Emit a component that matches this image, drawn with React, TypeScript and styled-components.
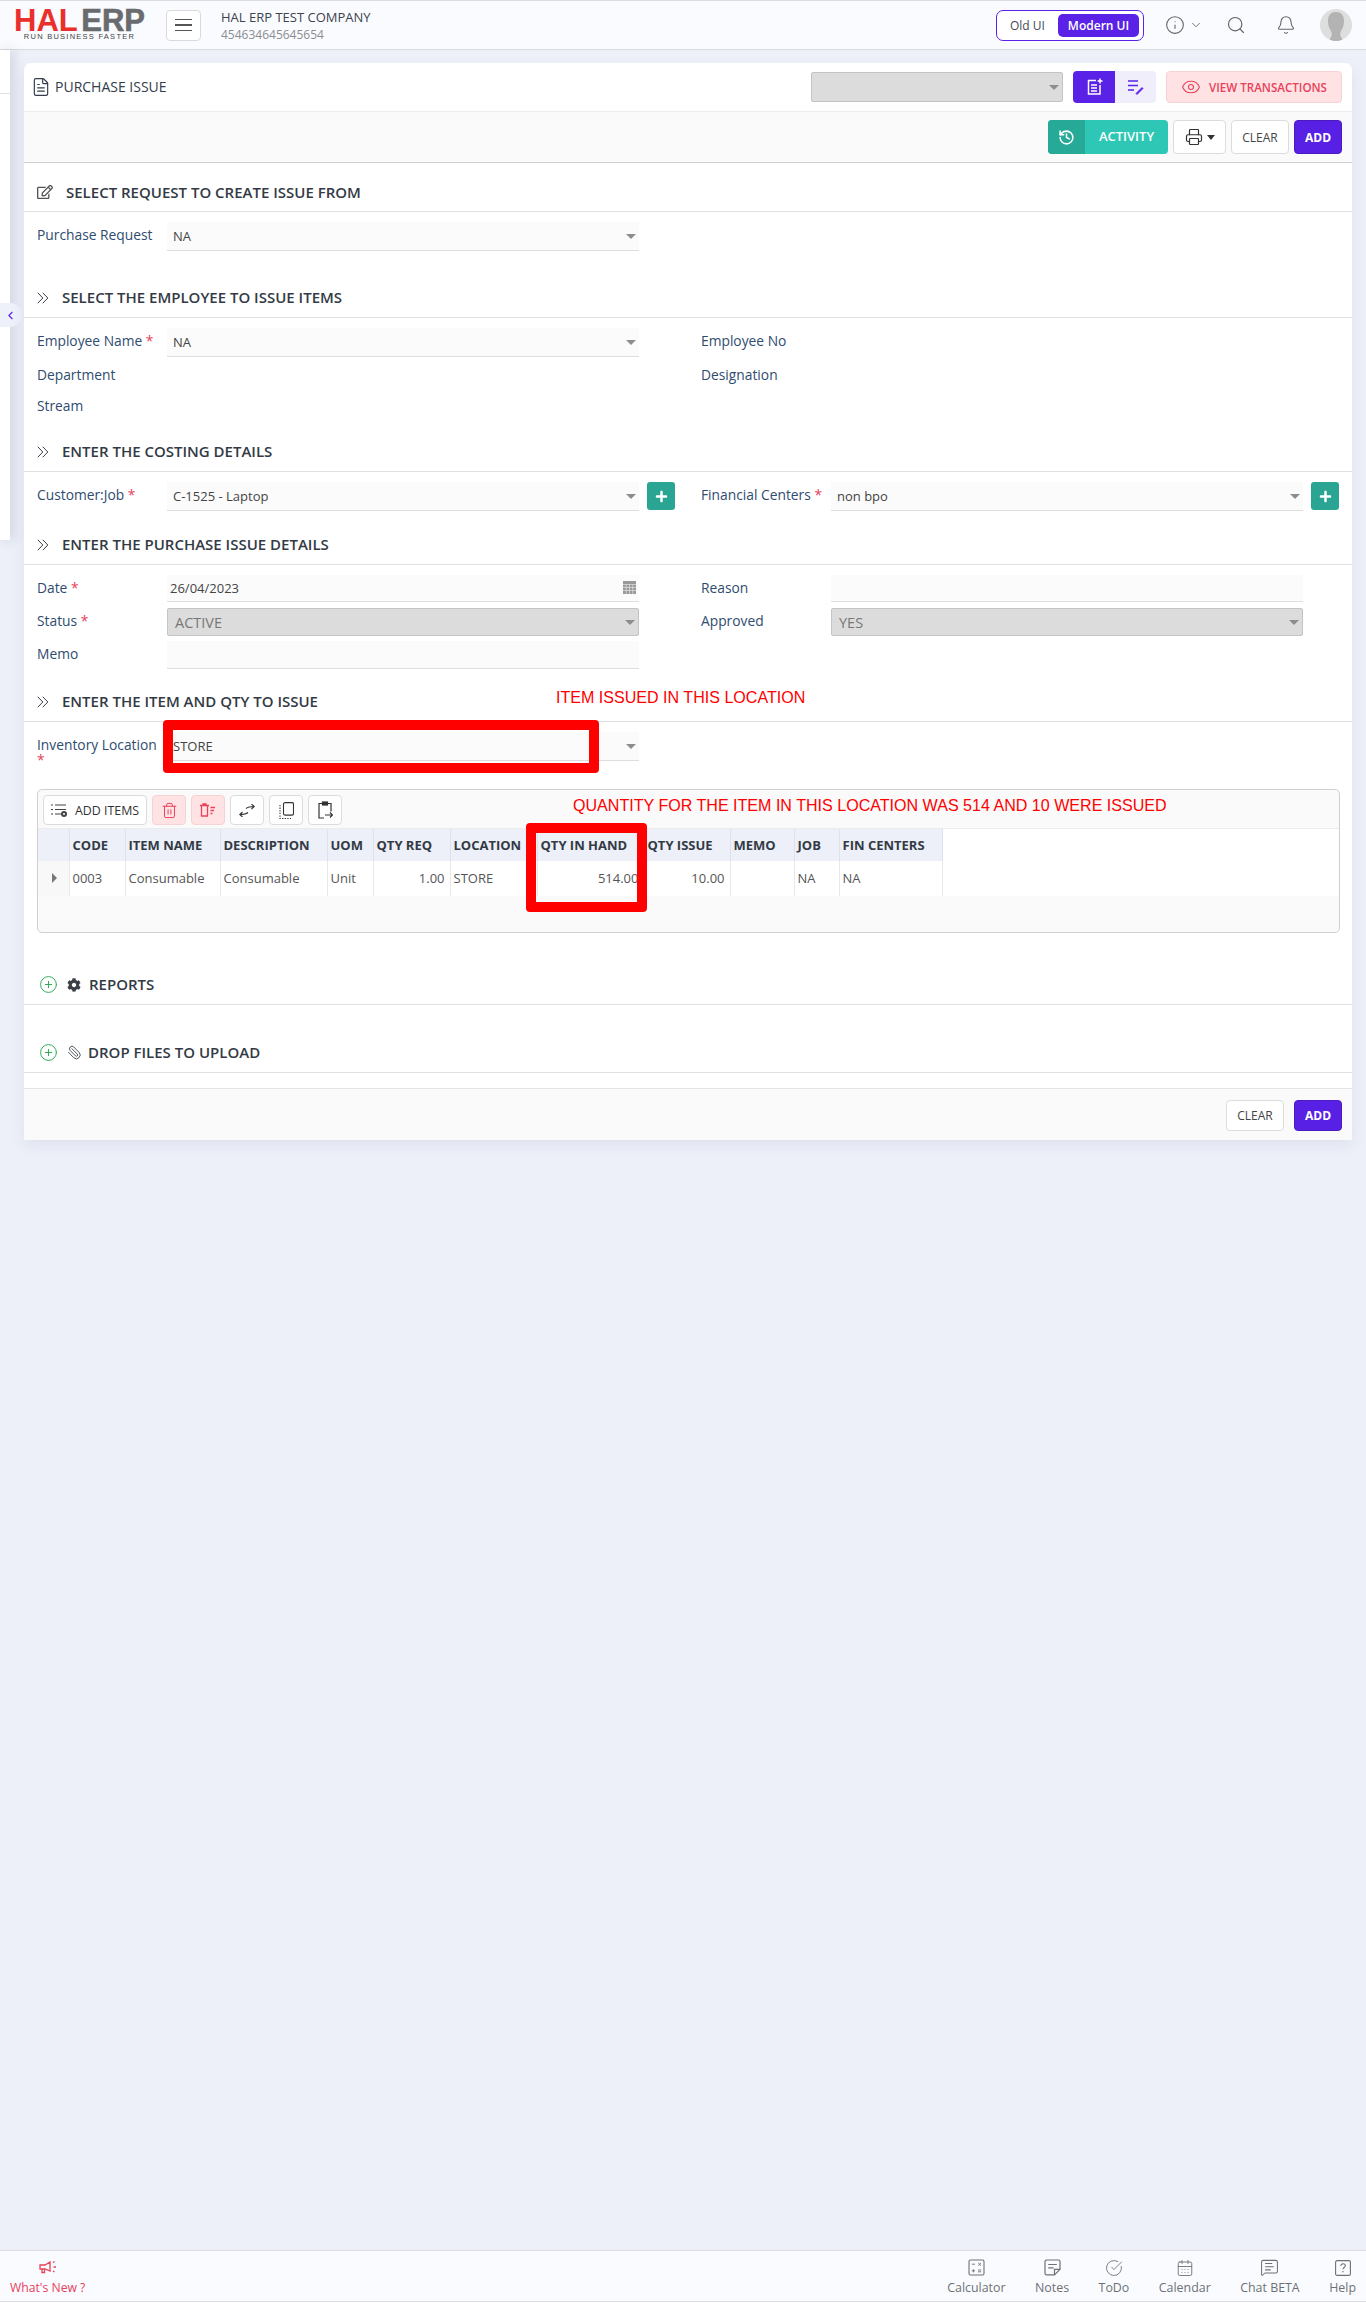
import styled, { createGlobalStyle } from "styled-components";
import {
  Bell,
  CalendarDays,
  ChevronDown,
  ChevronLeft,
  CircleCheckBig,
  CirclePlus,
  Eye,
  FileText,
  History,
  Info,
  MessageSquareText,
  Paperclip,
  Printer,
  Search,
  Trash2,
} from "lucide-react";
import { FaCog, FaPlus, FaRegEdit } from "react-icons/fa";

const GlobalStyle = createGlobalStyle`
    html, body {
        margin: 0;
        padding: 0;
        background: #edf0f8;
    }
    * {
        box-sizing: border-box;
    }
`;

const Page = styled.div`
    width: 1366px;
    min-height: 2302px;
    display: flex;
    flex-direction: column;
    background: #edf0f8;
    font-family: "Open Sans", "Liberation Sans", sans-serif;
    font-size: 13px;
    color: #333;
`;

/* top bar */
const TopBar = styled.header`
    height: 50px;
    display: flex;
    align-items: center;
    padding: 0 14px 0 14px;
    background: #fafbff;
    border-top: 1px solid #dddddd;
    border-bottom: 1px solid #d9dbe0;
`;

const Logo = styled.div`
    width: 131px;
    display: flex;
    flex-direction: column;
    align-items: center;
`;

const LogoMark = styled.div`
    display: flex;
    justify-content: space-between;
    width: 131px;
    height: 24px;
    font-family: "Liberation Sans", Arial, sans-serif;
    font-weight: 700;
    font-size: 31px;
    line-height: 24px;
`;

const LogoHal = styled.span`
    color: #e9302c;
`;

const LogoErp = styled.span`
    color: #6a6b6f;
    -webkit-text-stroke: 0.6px #6a6b6f;
`;

const LogoTag = styled.div`
    font-family: "Liberation Sans", Arial, sans-serif;
    font-size: 7.5px;
    line-height: 8px;
    letter-spacing: 1.25px;
    color: #444;
    white-space: nowrap;
`;

const MenuButton = styled.button`
    width: 35px;
    height: 31px;
    margin-left: 21px;
    display: flex;
    flex-direction: column;
    align-items: center;
    justify-content: center;
    gap: 4px;
    background: #fff;
    border: 1px solid #d8dadd;
    border-radius: 4px;
    padding: 0;

    span {
        display: block;
        width: 17px;
        height: 1.5px;
        background: #555;
    }
`;

const Company = styled.div`
    margin-left: 20px;
    padding-top: 2px;
    flex: 1;
`;

const CompanyName = styled.div`
    font-size: 13px;
    line-height: 16px;
    color: #3c4350;
`;

const CompanyCode = styled.div`
    font-size: 12px;
    line-height: 16px;
    margin-top: 2px;
    color: #8b8d92;
`;

const UiSwitch = styled.div`
    width: 148px;
    height: 31px;
    display: flex;
    align-items: center;
    padding: 0 4px 0 13px;
    background: #fff;
    border: 1px solid #5a22e6;
    border-radius: 7px;
    margin-right: 21px;
`;

const OldUi = styled.span`
    font-size: 12px;
    font-weight: 500;
    color: #454a58;
    flex: 1;
`;

const ModernUi = styled.span`
    width: 81px;
    height: 23px;
    display: flex;
    align-items: center;
    justify-content: center;
    font-size: 12px;
    font-weight: 600;
    color: #fff;
    background: #5a22e6;
    border-radius: 5px;
`;

const TopIcon = styled.span<{ $ml?: number }>`
    display: flex;
    margin-left: ${(p) => p.$ml ?? 0}px;
    color: #5f6368;
`;

const Avatar = styled.div`
    width: 32px;
    height: 32px;
    margin-left: 24px;
    border-radius: 50%;
    background: #dedede;
    overflow: hidden;
`;

/* main area */
const Main = styled.main`
    flex: 1;
    display: flex;
    align-items: flex-start;
`;

const SideStrip = styled.aside`
    position: relative;
    width: 10px;
    height: 490px;
    background: #fff;
    box-shadow: 3px 0 12px rgba(90, 95, 120, 0.22);
    flex-shrink: 0;

    &::before {
        content: "";
        display: block;
        height: 43px;
        border-bottom: 1px solid #e2e2e2;
    }
`;

const SideToggle = styled.button`
    position: absolute;
    left: 0;
    top: 253px;
    width: 22px;
    height: 24px;
    padding: 0 2px 0 0;
    display: flex;
    align-items: center;
    justify-content: center;
    background: #eef0fa;
    border: 0;
    border-radius: 0 12px 12px 0;
    color: #5a22e6;
`;

const Card = styled.section`
    position: relative;
    width: 1328px;
    margin: 13px 0 0 14px;
    background: #fff;
    border-radius: 7px 7px 0 0;
    box-shadow: 0 6px 14px rgba(120, 130, 170, 0.12);
`;

const TitleRow = styled.div`
    height: 49px;
    display: flex;
    align-items: center;
    padding: 0 10px 0 7px;
    border-bottom: 1px solid #ececec;
`;

const PageTitle = styled.h1`
    margin: 0 0 2px 4px;
    flex: 1;
    font-size: 14px;
    font-weight: 400;
    color: #333d4b;
`;

const TopSelect = styled.div`
    position: relative;
    width: 252px;
    height: 30px;
    background: #dcdcdc;
    border: 1px solid #c4c4c4;
    border-radius: 2px;
    margin-right: 10px;
`;

const Caret = styled.i`
    position: absolute;
    right: 3px;
    top: 50%;
    margin-top: -2px;
    width: 0;
    height: 0;
    border-left: 5px solid transparent;
    border-right: 5px solid transparent;
    border-top: 5px solid #8d8d8d;
`;

const ViewToggle = styled.div`
    width: 83px;
    height: 32px;
    display: flex;
    border-radius: 4px;
    overflow: hidden;
    margin-right: 10px;
`;

const ViewTab = styled.span<{ $active?: boolean }>`
    display: flex;
    align-items: center;
    justify-content: center;
    width: ${(p) => (p.$active ? 42 : 41)}px;
    color: ${(p) => (p.$active ? "#fff" : "#5a22e6")};
    background: ${(p) => (p.$active ? "#5a22e6" : "#f1eefc")};
`;

const TransactionsButton = styled.button`
    width: 176px;
    height: 32px;
    display: flex;
    align-items: center;
    justify-content: center;
    gap: 8px;
    padding: 0;
    background: #ffe3e4;
    border: 1px solid #f7d2d4;
    border-radius: 4px;
    color: #e8415a;
    font-family: inherit;
    font-size: 11.6px;
    font-weight: 600;
`;

const ActionRow = styled.div<{ $footer?: boolean }>`
    display: flex;
    align-items: center;
    justify-content: flex-end;
    height: ${(p) => (p.$footer ? 52 : 51)}px;
    padding-right: 10px;
    gap: ${(p) => (p.$footer ? 10 : 5)}px;
    background: #fafafa;
    ${(p) => (p.$footer ? "border-top: 1px solid #e4e4e4; margin-top: 15px; padding-top: 2px;" : "border-bottom: 1px solid #cfcfcf;")}
`;

const ActivityButton = styled.button`
    width: 120px;
    height: 34px;
    display: flex;
    align-items: stretch;
    padding: 0;
    border: 0;
    border-radius: 4px;
    overflow: hidden;
    background: #2ec7b6;
    color: #fff;
    font-family: inherit;
    font-size: 13px;
    font-weight: 600;
`;

const ActivityIcon = styled.span`
    width: 37px;
    display: flex;
    align-items: center;
    justify-content: center;
    background: #27a998;
`;

const ActivityText = styled.span`
    flex: 1;
    display: flex;
    align-items: center;
    justify-content: center;
    padding-bottom: 2px;
`;

const PlainButton = styled.button<{ $w: number; $h?: number }>`
    width: ${(p) => p.$w}px;
    height: ${(p) => p.$h ?? 34}px;
    display: flex;
    align-items: center;
    justify-content: center;
    gap: 4px;
    padding: 0;
    background: #fff;
    border: 1px solid #dcdcdc;
    border-radius: 4px;
    color: #444;
    font-family: inherit;
    font-size: 12px;
`;

const AddButton = styled.button<{ $h?: number }>`
    width: 48px;
    height: ${(p) => p.$h ?? 34}px;
    padding: 0;
    background: #5720e4;
    border: 1px solid #4a1cc0;
    border-radius: 4px;
    color: #fff;
    font-family: inherit;
    font-size: 12px;
    font-weight: 700;
`;

const SmallCaret = styled.i`
    width: 0;
    height: 0;
    border-left: 4px solid transparent;
    border-right: 4px solid transparent;
    border-top: 5px solid #333;
`;

/* sections */
const SectionHeader = styled.div<{ $top: number }>`
    height: 40px;
    margin-top: ${(p) => p.$top}px;
    display: flex;
    align-items: center;
    padding-left: 13px;
    border-bottom: 1px solid #e0e0e0;
`;

const SectionIcon = styled.span<{ $mr: number; $ml?: number; $color?: string }>`
    display: flex;
    margin-left: ${(p) => p.$ml ?? 0}px;
    margin-right: ${(p) => p.$mr}px;
    color: ${(p) => p.$color ?? "#3a3f47"};
`;

const ClipIcon = styled(Paperclip)`
    transform: scaleX(-1);
`;

const SectionTitle = styled.h2<{ $low?: boolean }>`
    margin: ${(p) => (p.$low ? "1px 0 0" : "0 0 1px")};
    font-size: 15px;
    font-weight: 600;
    color: #333a45;
`;

const FormRow = styled.div<{ $top?: number; $height?: number }>`
    display: grid;
    grid-template-columns: 638px 638px;
    column-gap: 26px;
    margin: ${(p) => p.$top ?? 0}px 0 0 13px;
    ${(p) => (p.$height ? `height: ${p.$height}px;` : "")}
`;

const Field = styled.div`
    display: grid;
    grid-template-columns: 130px 472px 36px;
    align-items: start;
`;

const FieldLabel = styled.label`
    padding-top: 5px;
    font-size: 13.8px;
    font-weight: 500;
    line-height: 15px;
    color: #2f4c70;
`;

const Required = styled.span`
    color: #e8415a;
`;

const InputBox = styled.div<{ $h?: number; $disabled?: boolean }>`
    position: relative;
    height: ${(p) => p.$h ?? 29}px;
    display: flex;
    align-items: center;
    padding: ${(p) => (p.$disabled ? "0 7px" : "0 6px")};
    font-size: ${(p) => (p.$disabled ? 14.5 : 13)}px;
    color: ${(p) => (p.$disabled ? "#777" : "#444")};
    background: ${(p) => (p.$disabled ? "#dcdcdc" : "#fbfbfb")};
    ${(p) =>
      p.$disabled
        ? "border: 1px solid #c4c4c4; border-radius: 2px;"
        : "border-bottom: 1px solid #dedede;"}
`;

const DateText = styled.span`
    margin-left: -3px;
`;

const CalendarGlyph = styled.span`
    position: absolute;
    right: 3px;
    top: 6px;
    display: flex;
`;

const AddField = styled.button`
    width: 28px;
    height: 28px;
    margin-left: 8px;
    padding: 0;
    display: flex;
    align-items: center;
    justify-content: center;
    background: #2aa593;
    border: 0;
    border-radius: 3px;
    color: #fff;
`;

/* items grid */
const GridBox = styled.div`
    margin: 28px 12px 0 13px;
    height: 144px;
    background: #fafafa;
    border: 1px solid #cfcfcf;
    border-radius: 5px;
    overflow: hidden;
`;

const GridToolbar = styled.div`
    height: 39px;
    display: flex;
    align-items: flex-start;
    gap: 5px;
    padding: 5px 0 0 5px;
    border-bottom: 1px solid #ececec;
`;

const ToolButton = styled.button<{ $danger?: boolean; $wide?: boolean }>`
    width: ${(p) => (p.$wide ? 104 : 34)}px;
    height: 30px;
    display: flex;
    align-items: center;
    justify-content: center;
    gap: 7px;
    padding: 0;
    background: ${(p) => (p.$danger ? "#ffe3e4" : "#fff")};
    border: 1px solid ${(p) => (p.$danger ? "#f7d2d4" : "#dcdcdc")};
    border-radius: 4px;
    color: ${(p) => (p.$danger ? "#e8415a" : "#333")};
    font-family: inherit;
    font-size: 12.4px;
`;

const GridArea = styled.div`
    background: #fff;
`;

const ItemTable = styled.table`
    table-layout: fixed;
    width: 904px;
    border-collapse: collapse;
`;

const HeadCell = styled.th<{ $w: number }>`
    width: ${(p) => p.$w}px;
    height: 32px;
    padding: 0 3px;
    text-align: left;
    white-space: nowrap;
    overflow: hidden;
    font-size: 13px;
    font-weight: 700;
    color: #333a45;
    background: #edf0f8;
    border-right: 1px solid #dfe2ea;
`;

const BodyCell = styled.td<{ $right?: boolean; $indicator?: boolean }>`
    height: 35px;
    padding: ${(p) => (p.$right ? "0 5px 2px 3px" : "0 3px 2px")};
    text-align: ${(p) => (p.$right ? "right" : "left")};
    white-space: nowrap;
    overflow: hidden;
    font-size: 13px;
    color: #555;
    background: ${(p) => (p.$indicator ? "#f8f8f8" : "#fff")};
    border-right: 1px solid #e8e8e8;
`;

const RowArrow = styled.i`
    display: block;
    width: 0;
    height: 0;
    margin-left: 11px;
    border-top: 5px solid transparent;
    border-bottom: 5px solid transparent;
    border-left: 5px solid #777;
`;

/* annotations drawn over the screenshot */
const RedBox = styled.div<{ $left: number; $top: number; $w: number; $h: number }>`
    position: absolute;
    left: ${(p) => p.$left}px;
    top: ${(p) => p.$top}px;
    width: ${(p) => p.$w}px;
    height: ${(p) => p.$h}px;
    border: 10px solid #ff0000;
    border-radius: 4px;
`;

const RedNote = styled.div<{ $left: number; $top: number }>`
    position: absolute;
    left: ${(p) => p.$left}px;
    top: ${(p) => p.$top}px;
    font-family: "Liberation Sans", Arial, sans-serif;
    font-size: 17px;
    line-height: 20px;
    color: #ff0000;
    white-space: nowrap;
    transform: scaleX(0.945);
    transform-origin: left center;
`;

/* bottom bar */
const BottomBar = styled.footer`
    height: 52px;
    display: flex;
    align-items: center;
    gap: 29.5px;
    padding: 2px 10px 0;
    background: #fafbff;
    border-top: 1px solid #dcdee3;
    border-bottom: 1px solid #dcdee3;
`;

const BarItem = styled.div<{ $news?: boolean }>`
    display: flex;
    flex-direction: column;
    align-items: center;
    gap: 3px;
    font-size: ${(p) => (p.$news ? 12.2 : 12.4)}px;
    line-height: 16px;
    color: ${(p) => (p.$news ? "#e8415a" : "#6d7176")};
    ${(p) => (p.$news ? "margin-right: auto;" : "")}
`;

const BarIcon = styled.span`
    display: flex;
    height: 18px;
    align-items: center;
`;

function AvatarFigure() {
  return (
    <svg width="32" height="32" viewBox="0 0 32 32">
      <path
        d="M16 3c5 0 8 3 8 9 0 4-1 7-3 10-1 2-1 4 0 6l2 4H9l2-4c1-2 1-4 0-6-2-3-3-6-3-10 0-6 3-9 8-9z"
        fill="#b3b3b3"
      />
    </svg>
  );
}

function NewDocIcon() {
  return (
    <svg width="17" height="18" viewBox="0 0 17 18" fill="none" stroke="currentColor" strokeWidth="1.5">
      <path d="M10 2.5H2.5v13.5h11.5V7" />
      <path d="M5 7h6M5 10h6M5 13h6" />
      <path d="M14 0.5v5M11.5 3h5" />
    </svg>
  );
}

function ListPenIcon() {
  return (
    <svg width="17" height="16" viewBox="0 0 17 16" fill="none" stroke="currentColor" strokeWidth="1.5">
      <path d="M1 2h10M1 6.5h10M1 11h6" />
      <path d="M9 14.5l6-6 1 1-6 6z" fill="currentColor" strokeWidth="0.8" />
    </svg>
  );
}

function AddListIcon() {
  return (
    <svg width="17" height="15" viewBox="0 0 17 15" fill="none" stroke="#444" strokeWidth="1.1">
      <path d="M0 2h2M4 2h11M0 6.5h2M4 6.5h11M0 11h2M4 11h6" />
      <circle cx="13" cy="11" r="3" fill="#444" stroke="none" />
      <circle cx="13" cy="11" r="1" fill="#fff" stroke="none" />
    </svg>
  );
}

function TrashListIcon() {
  return (
    <svg width="16" height="14" viewBox="0 0 16 14" fill="none" stroke="currentColor" strokeWidth="1.3">
      <path d="M0 2.5h9M3 2.5V1h3v1.5M1.5 2.5v10.5h6V2.5" />
      <path d="M10.5 4.5H15M10.5 7.5H14M10.5 10.5h2" />
    </svg>
  );
}

function SwapIcon() {
  return (
    <svg width="16" height="13" viewBox="0 0 16 13" fill="none" stroke="#333" strokeWidth="1.1">
      <path d="M7 4.500c2-1.700 4-2 8-2M12.500 0l2.700 2.500-2.700 2.500" />
      <path d="M9 8.500c-2 1.700-4 2-8 2M3.500 13L.8 10.500l2.700-2.500" />
    </svg>
  );
}

function CopyFrameIcon() {
  return (
    <svg width="15" height="17" viewBox="0 0 15 17" fill="none" stroke="#333" strokeWidth="1.1">
      <rect x="4.500" y="0.600" width="10" height="12.500" rx="1.500" />
      <path d="M1 3v13.500h11" strokeDasharray="1.300 1.300" />
    </svg>
  );
}

function PasteIcon() {
  return (
    <svg width="15" height="18" viewBox="0 0 15 18" fill="none" stroke="#333" strokeWidth="1.200">
      <path d="M4 2.500H1v14.500h5M10 2.500h3v8" />
      <rect x="4.500" y="1" width="5" height="3" fill="#333" />
      <path d="M7 14h7.500M12 11.500l2.500 2.500-2.500 2.500" />
    </svg>
  );
}

function DateGridIcon() {
  return (
    <svg width="13" height="13" viewBox="0 0 13 13">
      <rect width="13" height="13" fill="#999999" />
      <path d="M0 3.500h13M0 6.500h13M0 9.500h13M3.250 3.500V13M6.500 3.500V13M9.750 3.500V13" stroke="#ececec" strokeWidth="0.600" />
    </svg>
  );
}

function CalculatorIcon() {
  return (
    <svg width="17" height="17" viewBox="0 0 17 17" fill="none" stroke="currentColor" strokeWidth="1.100">
      <rect x="1" y="1" width="15" height="15" rx="1.500" />
      <path d="M3.800 5.200h3.200M3.800 11.800h3.200M5.400 10.200v3.200M10 11h3.200M10 12.800h3.200M10.200 3.800l2.800 2.800M13 3.800l-2.800 2.800" strokeWidth="0.900" />
    </svg>
  );
}

function NoteIcon() {
  return (
    <svg width="17" height="17" viewBox="0 0 17 17" fill="none" stroke="currentColor" strokeWidth="1.200">
      <path d="M10.500 15.800H2.600A1.600 1.600 0 0 1 1 14.200V2.600A1.600 1.600 0 0 1 2.600 1h11.800A1.600 1.600 0 0 1 16 2.600v7.700z" />
      <path d="M4.200 5.500h8.600M4.200 8.800h5.400" />
      <path d="M10.500 15.800v-5.500H16" />
    </svg>
  );
}

function HelpSquareIcon() {
  return (
    <svg width="16" height="16" viewBox="0 0 16 16" fill="none" stroke="currentColor" strokeWidth="1.100">
      <rect x="0.600" y="0.600" width="14.800" height="14.800" rx="1.500" />
      <path d="M5.800 6c0-1.400 1-2.200 2.300-2.200s2.200.8 2.200 2c0 1.700-2.300 1.600-2.300 3.400M8 11v1.200" />
    </svg>
  );
}

function MegaphoneIcon() {
  return (
    <svg width="18" height="14" viewBox="0 0 18 14" fill="none" stroke="currentColor" strokeWidth="1.300">
      <path d="M1 4h5l5-3v9L6 8H1z" />
      <path d="M3 8v3.500h2.500V8" />
      <path d="M14 1.500l1.500-1M14.500 6H17M14 10l1.500 1" />
    </svg>
  );
}

const columns = [
  { title: "", width: 31 },
  { title: "CODE", width: 56, value: "0003" },
  { title: "ITEM NAME", width: 95, value: "Consumable" },
  { title: "DESCRIPTION", width: 107, value: "Consumable" },
  { title: "UOM", width: 46, value: "Unit" },
  { title: "QTY REQ", width: 77, value: "1.00", right: true },
  { title: "LOCATION", width: 87, value: "STORE" },
  { title: "QTY IN HAND", width: 107, value: "514.00", right: true },
  { title: "QTY ISSUE", width: 86, value: "10.00", right: true },
  { title: "MEMO", width: 64, value: "" },
  { title: "JOB", width: 45, value: "NA" },
  { title: "FIN CENTERS", width: 103, value: "NA" },
];

const barItems = [
  { label: "Calculator", icon: <CalculatorIcon /> },
  { label: "Notes", icon: <NoteIcon /> },
  { label: "ToDo", icon: <CircleCheckBig size={18} strokeWidth={1.2} /> },
  { label: "Calendar", icon: <CalendarDays size={18} strokeWidth={1.2} /> },
  { label: "Chat BETA", icon: <MessageSquareText size={19} strokeWidth={1.3} /> },
  { label: "Help", icon: <HelpSquareIcon /> },
];

function SectionChevrons() {
  return (
    <SectionIcon $mr={13}>
      <svg width="12" height="12" viewBox="0 0 12 12" fill="none" stroke="currentColor" strokeWidth="1">
        <path d="M0.800 0.800l5 5.200-5 5.200M5.800 0.800l5 5.200-5 5.200" />
      </svg>
    </SectionIcon>
  );
}

function App() {
  return (
    <Page>
      <GlobalStyle />
      <TopBar>
        <Logo>
          <LogoMark>
            <LogoHal>HAL</LogoHal>
            <LogoErp>ERP</LogoErp>
          </LogoMark>
          <LogoTag>RUN BUSINESS FASTER</LogoTag>
        </Logo>
        <MenuButton>
          <span />
          <span />
          <span />
        </MenuButton>
        <Company>
          <CompanyName>HAL ERP TEST COMPANY</CompanyName>
          <CompanyCode>454634645645654</CompanyCode>
        </Company>
        <UiSwitch>
          <OldUi>Old UI</OldUi>
          <ModernUi>Modern UI</ModernUi>
        </UiSwitch>
        <TopIcon>
          <Info size={20} strokeWidth={1.3} />
        </TopIcon>
        <TopIcon $ml={4}>
          <ChevronDown size={14} strokeWidth={1.5} />
        </TopIcon>
        <TopIcon $ml={23}>
          <Search size={20} strokeWidth={1.4} />
        </TopIcon>
        <TopIcon $ml={30}>
          <Bell size={20} strokeWidth={1.3} />
        </TopIcon>
        <Avatar>
          <AvatarFigure />
        </Avatar>
      </TopBar>

      <Main>
        <SideStrip>
          <SideToggle>
            <ChevronLeft size={13} />
          </SideToggle>
        </SideStrip>

        <Card>
          <TitleRow>
            <FileText size={20} strokeWidth={1.4} color="#333d4b" />
            <PageTitle>PURCHASE ISSUE</PageTitle>
            <TopSelect>
              <Caret />
            </TopSelect>
            <ViewToggle>
              <ViewTab $active>
                <NewDocIcon />
              </ViewTab>
              <ViewTab>
                <ListPenIcon />
              </ViewTab>
            </ViewToggle>
            <TransactionsButton>
              <Eye size={20} strokeWidth={1.3} />
              VIEW TRANSACTIONS
            </TransactionsButton>
          </TitleRow>

          <ActionRow>
            <ActivityButton>
              <ActivityIcon>
                <History size={17} strokeWidth={2.2} />
              </ActivityIcon>
              <ActivityText>ACTIVITY</ActivityText>
            </ActivityButton>
            <PlainButton $w={53}>
              <Printer size={18} strokeWidth={1.6} color="#333" />
              <SmallCaret />
            </PlainButton>
            <PlainButton $w={58}>CLEAR</PlainButton>
            <AddButton>ADD</AddButton>
          </ActionRow>

          <SectionHeader $top={9}>
            <SectionIcon $mr={13}>
              <FaRegEdit size={16} color="#555" />
            </SectionIcon>
            <SectionTitle $low>SELECT REQUEST TO CREATE ISSUE FROM</SectionTitle>
          </SectionHeader>
          <FormRow $top={10}>
            <Field>
              <FieldLabel>Purchase Request</FieldLabel>
              <InputBox>
                NA
                <Caret />
              </InputBox>
            </Field>
          </FormRow>

          <SectionHeader $top={27}>
            <SectionChevrons />
            <SectionTitle>SELECT THE EMPLOYEE TO ISSUE ITEMS</SectionTitle>
          </SectionHeader>
          <FormRow $top={10} $height={34}>
            <Field>
              <FieldLabel>
                Employee Name <Required>*</Required>
              </FieldLabel>
              <InputBox>
                NA
                <Caret />
              </InputBox>
            </Field>
            <Field>
              <FieldLabel>Employee No</FieldLabel>
            </Field>
          </FormRow>
          <FormRow $height={31}>
            <Field>
              <FieldLabel>Department</FieldLabel>
            </Field>
            <Field>
              <FieldLabel>Designation</FieldLabel>
            </Field>
          </FormRow>
          <FormRow $height={28}>
            <Field>
              <FieldLabel>Stream</FieldLabel>
            </Field>
          </FormRow>

          <SectionHeader $top={11}>
            <SectionChevrons />
            <SectionTitle>ENTER THE COSTING DETAILS</SectionTitle>
          </SectionHeader>
          <FormRow $top={10}>
            <Field>
              <FieldLabel>
                Customer:Job <Required>*</Required>
              </FieldLabel>
              <InputBox>
                C-1525 - Laptop
                <Caret />
              </InputBox>
              <AddField>
                <FaPlus size={13} />
              </AddField>
            </Field>
            <Field>
              <FieldLabel>
                Financial Centers <Required>*</Required>
              </FieldLabel>
              <InputBox>
                non bpo
                <Caret />
              </InputBox>
              <AddField>
                <FaPlus size={13} />
              </AddField>
            </Field>
          </FormRow>

          <SectionHeader $top={14}>
            <SectionChevrons />
            <SectionTitle>ENTER THE PURCHASE ISSUE DETAILS</SectionTitle>
          </SectionHeader>
          <FormRow $top={10}>
            <Field>
              <FieldLabel>
                Date <Required>*</Required>
              </FieldLabel>
              <InputBox $h={27}>
                <DateText>26/04/2023</DateText>
                <CalendarGlyph>
                  <DateGridIcon />
                </CalendarGlyph>
              </InputBox>
            </Field>
            <Field>
              <FieldLabel>Reason</FieldLabel>
              <InputBox $h={27} />
            </Field>
          </FormRow>
          <FormRow $top={6}>
            <Field>
              <FieldLabel>
                Status <Required>*</Required>
              </FieldLabel>
              <InputBox $h={28} $disabled>
                ACTIVE
                <Caret />
              </InputBox>
            </Field>
            <Field>
              <FieldLabel>Approved</FieldLabel>
              <InputBox $h={28} $disabled>
                YES
                <Caret />
              </InputBox>
            </Field>
          </FormRow>
          <FormRow $top={5}>
            <Field>
              <FieldLabel>Memo</FieldLabel>
              <InputBox $h={28} />
            </Field>
          </FormRow>

          <SectionHeader $top={13}>
            <SectionChevrons />
            <SectionTitle>ENTER THE ITEM AND QTY TO ISSUE</SectionTitle>
          </SectionHeader>
          <FormRow $top={10} $height={29}>
            <Field>
              <FieldLabel>
                Inventory Location <Required>*</Required>
              </FieldLabel>
              <InputBox>
                STORE
                <Caret />
              </InputBox>
            </Field>
          </FormRow>

          <GridBox>
            <GridToolbar>
              <ToolButton $wide>
                <AddListIcon />
                ADD ITEMS
              </ToolButton>
              <ToolButton $danger>
                <Trash2 size={17} strokeWidth={1.4} />
              </ToolButton>
              <ToolButton $danger>
                <TrashListIcon />
              </ToolButton>
              <ToolButton>
                <SwapIcon />
              </ToolButton>
              <ToolButton>
                <CopyFrameIcon />
              </ToolButton>
              <ToolButton>
                <PasteIcon />
              </ToolButton>
            </GridToolbar>
            <GridArea>
              <ItemTable>
                <thead>
                  <tr>
                    {columns.map((col) => (
                      <HeadCell key={col.title} $w={col.width}>
                        {col.title}
                      </HeadCell>
                    ))}
                  </tr>
                </thead>
                <tbody>
                  <tr>
                    {columns.map((col) =>
                      col.title === "" ? (
                        <BodyCell key="arrow" $indicator>
                          <RowArrow />
                        </BodyCell>
                      ) : (
                        <BodyCell key={col.title} $right={col.right}>
                          {col.value}
                        </BodyCell>
                      )
                    )}
                  </tr>
                </tbody>
              </ItemTable>
            </GridArea>
          </GridBox>

          <SectionHeader $top={32}>
            <SectionIcon $ml={2} $mr={9} $color="#2aa84f">
              <CirclePlus size={19} strokeWidth={1.2} />
            </SectionIcon>
            <SectionIcon $mr={8}>
              <FaCog size={14} />
            </SectionIcon>
            <SectionTitle>REPORTS</SectionTitle>
          </SectionHeader>
          <SectionHeader $top={28}>
            <SectionIcon $ml={2} $mr={9} $color="#2aa84f">
              <CirclePlus size={19} strokeWidth={1.2} />
            </SectionIcon>
            <SectionIcon $mr={6}>
              <ClipIcon size={15} strokeWidth={1.4} />
            </SectionIcon>
            <SectionTitle>DROP FILES TO UPLOAD</SectionTitle>
          </SectionHeader>

          <ActionRow $footer>
            <PlainButton $w={58} $h={31}>
              CLEAR
            </PlainButton>
            <AddButton $h={31}>ADD</AddButton>
          </ActionRow>

          <RedBox $left={139} $top={657} $w={436} $h={53} />
          <RedBox $left={502} $top={760} $w={121} $h={89} />
          <RedNote $left={532} $top={625}>
            ITEM ISSUED IN THIS LOCATION
          </RedNote>
          <RedNote $left={549} $top={733}>
            QUANTITY FOR THE ITEM IN THIS LOCATION WAS 514 AND 10 WERE ISSUED
          </RedNote>
        </Card>
      </Main>

      <BottomBar>
        <BarItem $news>
          <BarIcon>
            <MegaphoneIcon />
          </BarIcon>
          What's New ?
        </BarItem>
        {barItems.map((item) => (
          <BarItem key={item.label}>
            <BarIcon>{item.icon}</BarIcon>
            {item.label}
          </BarItem>
        ))}
      </BottomBar>
    </Page>
  );
}

export default App;
